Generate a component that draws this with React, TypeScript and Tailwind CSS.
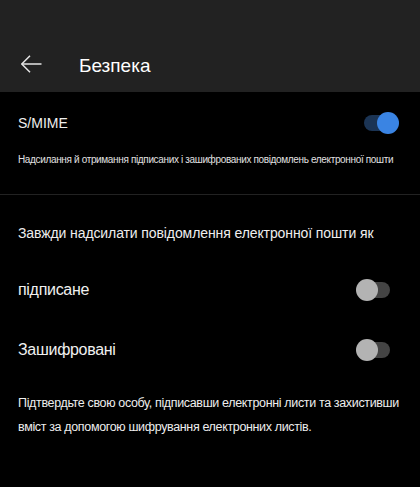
function Toggle({ on }: { on: boolean }) {
  if (on) {
    return (
      <div className="relative h-[16px] w-[35px]">
        <div className="absolute left-0 top-0 h-[16px] w-[30px] rounded-full bg-[#1b3454]" />
        <div className="absolute right-0 top-[-3px] h-[22px] w-[22px] rounded-full bg-[#3a84e3]" />
      </div>
    );
  }
  return (
    <div className="relative h-[16px] w-[34px]">
      <div className="absolute right-0 top-0 h-[16px] w-[30px] rounded-full bg-[#444444]" />
      <div className="absolute left-0 top-[-3px] h-[22px] w-[22px] rounded-full bg-[#b3b3b3]" />
    </div>
  );
}

export default function App() {
  return (
    <div className="min-h-[487px] w-[420px] bg-black text-white" style={{ fontFamily: '"Liberation Sans", Arial, sans-serif' }}>
      <header className="flex h-[92px] items-end bg-[#222222] pb-[14px]">
        <button className="mb-[5px] ml-[21px] flex h-[18px] w-[21px] items-center text-[#e6e6e6]">
          <svg width="21" height="18" viewBox="0 0 21 18" fill="none" stroke="currentColor" strokeWidth="1.5">
            <path d="M0.8 9 H20.5" />
            <path d="M9 0.8 L0.8 9 L9 17.2" strokeLinejoin="miter" />
          </svg>
        </button>
        <h1 className="ml-[37px] text-[19px] leading-[24px] text-white">Безпека</h1>
      </header>

      <section className="border-b border-[#222222] px-[18px] pb-[27px] pt-[21px]">
        <div className="flex items-center justify-between pr-[3px]">
          <span className="text-[14px] leading-[20px] text-[#eeeeee]">S/MIME</span>
          <Toggle on />
        </div>
        <p className="mt-[20px] text-[10px] leading-[14px] tracking-[-0.35px] text-[#e0e0e0]">
          Надсилання й отримання підписаних і зашифрованих повідомлень електронної пошти
        </p>
      </section>

      <section className="px-[18px] pt-[28px]">
        <p className="text-[14px] leading-[20px] tracking-[-0.1px] text-[#eeeeee]">Завжди надсилати повідомлення електронної пошти як</p>
        <div className="mt-[36px] flex items-center justify-between pr-[12px]">
          <span className="text-[16px] leading-[22px] tracking-[-0.3px] text-[#f0f0f0]">підписане</span>
          <Toggle on={false} />
        </div>
        <div className="mt-[38px] flex items-center justify-between pr-[12px]">
          <span className="text-[16px] leading-[22px] tracking-[-0.3px] text-[#f0f0f0]">Зашифровані</span>
          <Toggle on={false} />
        </div>
        <p className="mt-[30px] text-[12.5px] leading-[24px] tracking-[-0.35px] text-[#eeeeee]">
          Підтвердьте свою особу, підписавши електронні листи та захистивши вміст за допомогою шифрування електронних листів.
        </p>
      </section>
    </div>
  );
}
